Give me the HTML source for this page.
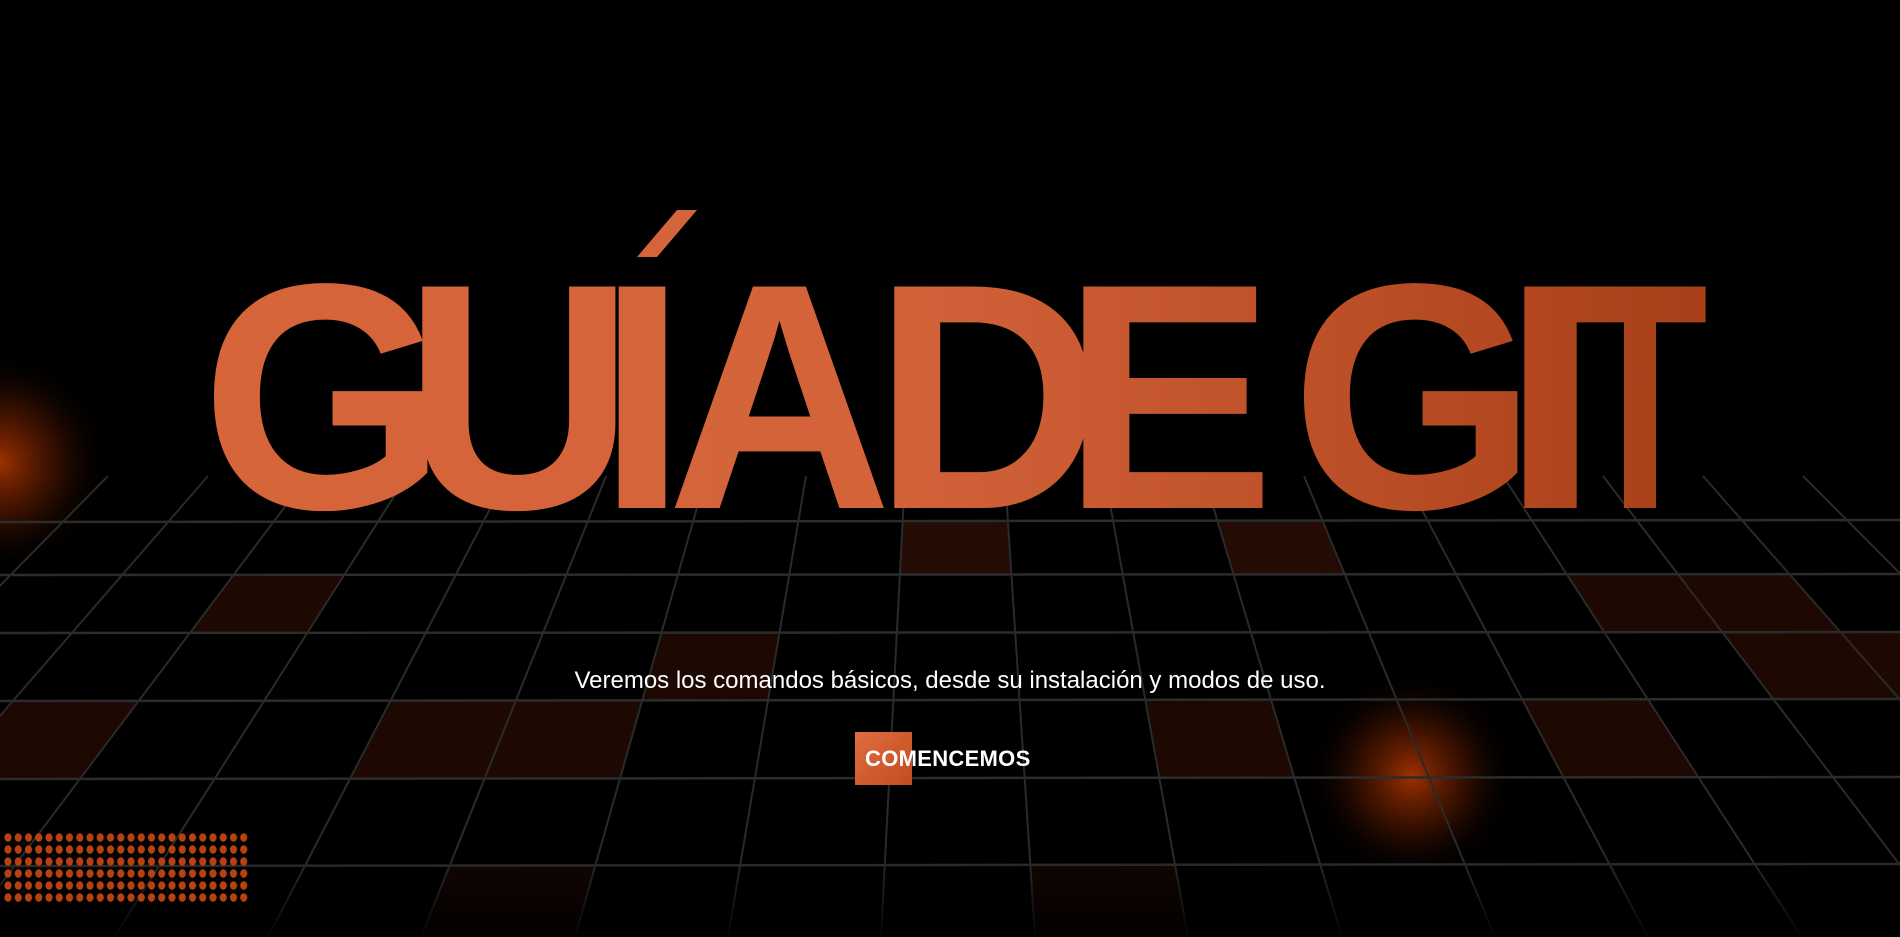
<!DOCTYPE html>
<html><head><meta charset="utf-8"><style>
html,body{margin:0;padding:0;background:#000;width:1900px;height:937px;overflow:hidden}
.wrap{position:relative;width:1900px;height:937px;background:#000}
svg{position:absolute;left:0;top:0}
.sub{position:absolute;left:0;width:1900px;top:667px;text-align:center;color:#fff;font:24px "Liberation Sans",sans-serif}
.btnbg{position:absolute;left:855px;top:732px;width:57px;height:53px;background:linear-gradient(135deg,#e06e40,#c24c1d)}
.btn{position:absolute;left:865px;top:746px;color:#fff;font:bold 22px "Liberation Sans",sans-serif;letter-spacing:0.3px}
</style></head><body><div class="wrap">
<svg width="1900" height="937" viewBox="0 0 1900 937">
<defs>
<radialGradient id="gl" cx="0.5" cy="0.5" r="0.5"><stop offset="0" stop-color="#a83400" stop-opacity="0.95"/><stop offset="0.5" stop-color="#6a1e00" stop-opacity="0.5"/><stop offset="1" stop-color="#000" stop-opacity="0"/></radialGradient>
<linearGradient id="fade" x1="0" y1="0" x2="0" y2="1"><stop offset="0" stop-color="#000" stop-opacity="0"/><stop offset="1" stop-color="#000" stop-opacity="0.9"/></linearGradient>
<linearGradient id="tg" x1="200" y1="0" x2="1710" y2="0" gradientUnits="userSpaceOnUse"><stop offset="0" stop-color="#d6653a"/><stop offset="0.45" stop-color="#d4633a"/><stop offset="1" stop-color="#a83f18"/></linearGradient>
<pattern id="dp" x="4" y="833" width="10.25" height="12" patternUnits="userSpaceOnUse"><ellipse cx="4" cy="4.5" rx="3.6" ry="4.3" fill="#b8420f"/></pattern>
</defs>
<g fill="#1d0802">
<polygon points="903,522 1008,522 1011,575 900,575" fill="#240c04"/>
<polygon points="1218,522 1323,522 1345,575 1234,575" fill="#240c04"/>
<polygon points="233,575 344,575 308,633 190,633"/>
<polygon points="1567,575 1790,575 1841,633 1605,633"/>
<polygon points="661,633 779,633 768,700 642,700"/>
<polygon points="1723,633 1959,633 2026,700 1774,700"/>
<polygon points="13,700 139,700 80,778 -54,778"/>
<polygon points="391,700 642,700 620,778 350,778"/>
<polygon points="1145,700 1271,700 1294,778 1159,778"/>
<polygon points="1522,700 1648,700 1699,778 1564,778"/>
<polygon points="450,865 595,865 574,937 421,937" fill="#120501"/>
<polygon points="1030,865 1175,865 1188,937 1035,937" fill="#120501"/>
</g>
<circle cx="0" cy="462" r="110" fill="url(#gl)"/>
<circle cx="1412" cy="776" r="105" fill="url(#gl)"/>
<g stroke="#2c2c2c" stroke-width="2.5">
<line x1="0" y1="522" x2="1900" y2="520"/>
<line x1="0" y1="575" x2="1900" y2="574"/>
<line x1="0" y1="633" x2="1900" y2="632"/>
<line x1="0" y1="701" x2="1900" y2="699"/>
<line x1="0" y1="779" x2="1900" y2="777"/>
<line x1="0" y1="866" x2="1900" y2="864"/>
</g>
<g stroke="#2a2a2a" stroke-width="2">
<line x1="-23" y1="476" x2="-499" y2="937"/>
<line x1="108" y1="476" x2="-346" y2="937"/>
<line x1="208" y1="476" x2="-192" y2="937"/>
<line x1="308" y1="476" x2="-39" y2="937"/>
<line x1="407" y1="476" x2="114" y2="937"/>
<line x1="507" y1="476" x2="268" y2="937"/>
<line x1="606" y1="476" x2="421" y2="937"/>
<line x1="706" y1="476" x2="575" y2="937"/>
<line x1="806" y1="476" x2="728" y2="937"/>
<line x1="905" y1="476" x2="881" y2="937"/>
<line x1="1005" y1="476" x2="1035" y2="937"/>
<line x1="1105" y1="476" x2="1188" y2="937"/>
<line x1="1204" y1="476" x2="1342" y2="937"/>
<line x1="1304" y1="476" x2="1495" y2="937"/>
<line x1="1404" y1="476" x2="1648" y2="937"/>
<line x1="1503" y1="476" x2="1802" y2="937"/>
<line x1="1603" y1="476" x2="1955" y2="937"/>
<line x1="1703" y1="476" x2="2109" y2="937"/>
<line x1="1803" y1="476" x2="2262" y2="937"/>
<line x1="1902" y1="476" x2="2415" y2="937"/>
</g>
<rect x="0" y="860" width="1900" height="77" fill="url(#fade)"/>
<g font-family="Liberation Sans, Arial, sans-serif" font-weight="bold" font-size="322" fill="url(#tg)">
<text x="201" y="508" textLength="246" lengthAdjust="spacingAndGlyphs">G</text>
<text x="403" y="508" textLength="232" lengthAdjust="spacingAndGlyphs">U</text>
<text x="597" y="508" textLength="90" lengthAdjust="spacingAndGlyphs">I</text>
<text x="667" y="508" textLength="225" lengthAdjust="spacingAndGlyphs">A</text>
<text x="873" y="508" textLength="230" lengthAdjust="spacingAndGlyphs">D</text>
<text x="1062" y="508" textLength="213" lengthAdjust="spacingAndGlyphs">E</text>
<text x="1291" y="508" textLength="246" lengthAdjust="spacingAndGlyphs">G</text>
<text x="1500" y="508" textLength="101" lengthAdjust="spacingAndGlyphs">I</text>
<text x="1572" y="508" textLength="136" lengthAdjust="spacingAndGlyphs">T</text>
<polygon points="637,257 657,257 697,210 677,210"/>
</g>
<rect x="4" y="833" width="246" height="72" fill="url(#dp)"/>
</svg>
<div class="sub">Veremos los comandos básicos, desde su instalación y modos de uso.</div>
<div class="btnbg"></div>
<div class="btn">COMENCEMOS</div>
</div></body></html>
